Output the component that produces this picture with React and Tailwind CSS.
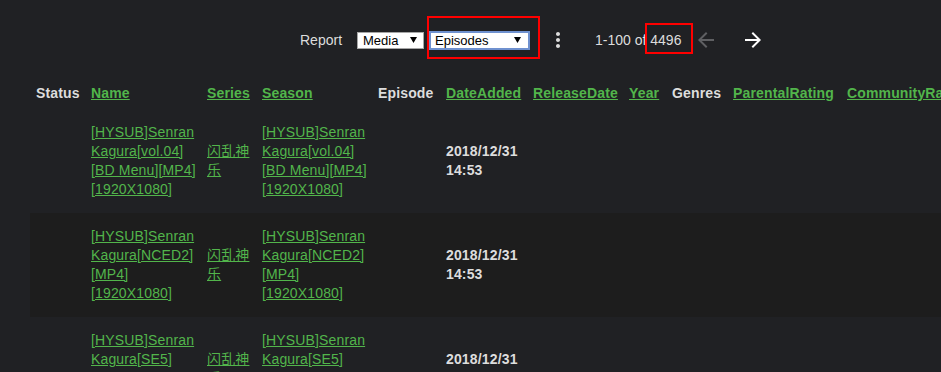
import React from "react";

const green = "text-[#52b54b] underline decoration-[#52b54b]";

const rows = [
  { name: "[HYSUB]Senran Kagura[vol.04][BD Menu][MP4][1920X1080]", series: "闪乱神乐", date: "2018/12/31", time: "14:53" },
  { name: "[HYSUB]Senran Kagura[NCED2][MP4][1920X1080]", series: "闪乱神乐", date: "2018/12/31", time: "14:53" },
  { name: "[HYSUB]Senran Kagura[SE5][MP4][1920X1080]", series: "闪乱神乐", date: "2018/12/31", time: "14:53" },
];

// widths taken from the column positions in the report grid
const headers = [
  { label: "Status", w: "w-[43px]" },
  { label: "Name", link: true, w: "w-[106px]", pr: "pr-[4px]" },
  { label: "Series", link: true, w: "w-[43px]" },
  { label: "Season", link: true, w: "w-[106px]", pr: "pr-[4px]" },
  { label: "Episode", w: "w-[56px]" },
  { label: "DateAdded", link: true, w: "w-[75px]" },
  { label: "ReleaseDate", link: true, w: "w-[84px]" },
  { label: "Year", link: true, w: "w-[31px]" },
  { label: "Genres", w: "w-[49px]" },
  { label: "ParentalRating", link: true, w: "w-[102px]" },
  { label: "CommunityRating", link: true, w: "w-[120px]" },
  { label: "CriticRating", link: true, w: "w-[90px]" },
  { label: "Runtime", link: true, w: "w-[60px]" },
];

function Caret() {
  return (
    <svg width="7" height="6" viewBox="0 0 7 6" className="shrink-0">
      <polygon points="0,0 7,0 3.5,6" fill="#000" />
    </svg>
  );
}

function FakeSelect({ label, className }) {
  return (
    <div className={`flex items-center justify-between bg-white text-[13px] leading-none tracking-normal text-black ${className}`}>
      <span>{label}</span>
      <Caret />
    </div>
  );
}

export default function App() {
  return (
    <div className="relative h-[372px] w-[941px] overflow-hidden bg-[#202124] font-['Liberation_Sans','Noto_Sans_CJK_SC',sans-serif] text-[14px] tracking-[0.15px] text-[#dddddd]">
      <div className="flex items-center pl-[300px] pt-[28px] pb-[24px]">
        <span className="leading-[24px] tracking-normal">Report</span>
        <FakeSelect label="Media" className="ml-[15px] h-[17px] w-[67px] border border-[#a6a6a6] pl-[5px] pr-[6px]" />
        <FakeSelect label="Episodes" className="ml-[5px] h-[19px] w-[101px] border-2 border-[#6f91cf] pl-[4px] pr-[7px]" />
        <button className="ml-[16px] h-[24px] w-[24px]">
          <svg viewBox="0 0 24 24" width="24" height="24" fill="#dddddd">
            <path d="M12 8c1.1 0 2-.9 2-2s-.9-2-2-2-2 .9-2 2 .9 2 2 2zm0 2c-1.1 0-2 .9-2 2s.9 2 2 2 2-.9 2-2-.9-2-2-2zm0 6c-1.1 0-2 .9-2 2s.9 2 2 2 2-.9 2-2-.9-2-2-2z" />
          </svg>
        </button>
        <span className="ml-[25px] leading-[24px] tracking-normal">1-100 of 4496</span>
        <button className="ml-[13px] h-[24px] w-[24px]">
          <svg viewBox="0 0 24 24" width="24" height="24" fill="#5f6063">
            <path d="M20 11H7.83l5.59-5.59L12 4l-8 8 8 8 1.41-1.41L7.83 13H20v-2z" />
          </svg>
        </button>
        <button className="ml-[23px] h-[24px] w-[24px]">
          <svg viewBox="0 0 24 24" width="24" height="24" fill="#ffffff">
            <path d="M12 4l-1.41 1.41L16.17 11H4v2h12.17l-5.58 5.59L12 20l8-8z" />
          </svg>
        </button>
      </div>

      <div className="pl-[30px]">
        <table className="w-max border-collapse">
          <thead>
            <tr>
              {headers.map((h) => (
                <th
                  key={h.label}
                  className={`whitespace-nowrap pl-[6px] ${h.pr || "pr-[6px]"} pt-[8px] pb-[6px] text-left align-middle font-bold leading-[19px]`}
                >
                  <div className={h.w}>
                    <span className={h.link ? green : "text-[#dddddd]"}>{h.label}</span>
                  </div>
                </th>
              ))}
            </tr>
          </thead>
          <tbody>
            {rows.map((r, i) => (
              <tr key={i} className={i % 2 === 1 ? "bg-[#1d1d1d]" : ""}>
                <td className="px-[6px] py-[14px]" />
                <td className="pl-[6px] pr-[4px] py-[14px] align-middle leading-[19px]">
                  <div className="w-[106px]">
                    <a className={green}>{r.name}</a>
                  </div>
                </td>
                <td className="px-[6px] py-[14px] align-middle leading-[19px]">
                  <div className="w-[43px]">
                    <a className={green}>{r.series}</a>
                  </div>
                </td>
                <td className="pl-[6px] pr-[4px] py-[14px] align-middle leading-[19px]">
                  <div className="w-[106px]">
                    <a className={green}>{r.name}</a>
                  </div>
                </td>
                <td className="px-[6px] py-[14px]" />
                <td className="px-[6px] py-[14px] align-middle font-bold leading-[19px] text-[#dddddd]">
                  {r.date}
                  <br />
                  {r.time}
                </td>
                {headers.slice(6).map((h) => (
                  <td key={h.label} className="px-[6px] py-[14px]" />
                ))}
              </tr>
            ))}
          </tbody>
        </table>
      </div>

      <div className="absolute left-[427px] top-[16px] h-[43px] w-[113px] border-2 border-[#ff0000]" />
      <div className="absolute left-[645px] top-[23px] h-[31px] w-[48px] border-2 border-[#ff0000]" />
    </div>
  );
}
